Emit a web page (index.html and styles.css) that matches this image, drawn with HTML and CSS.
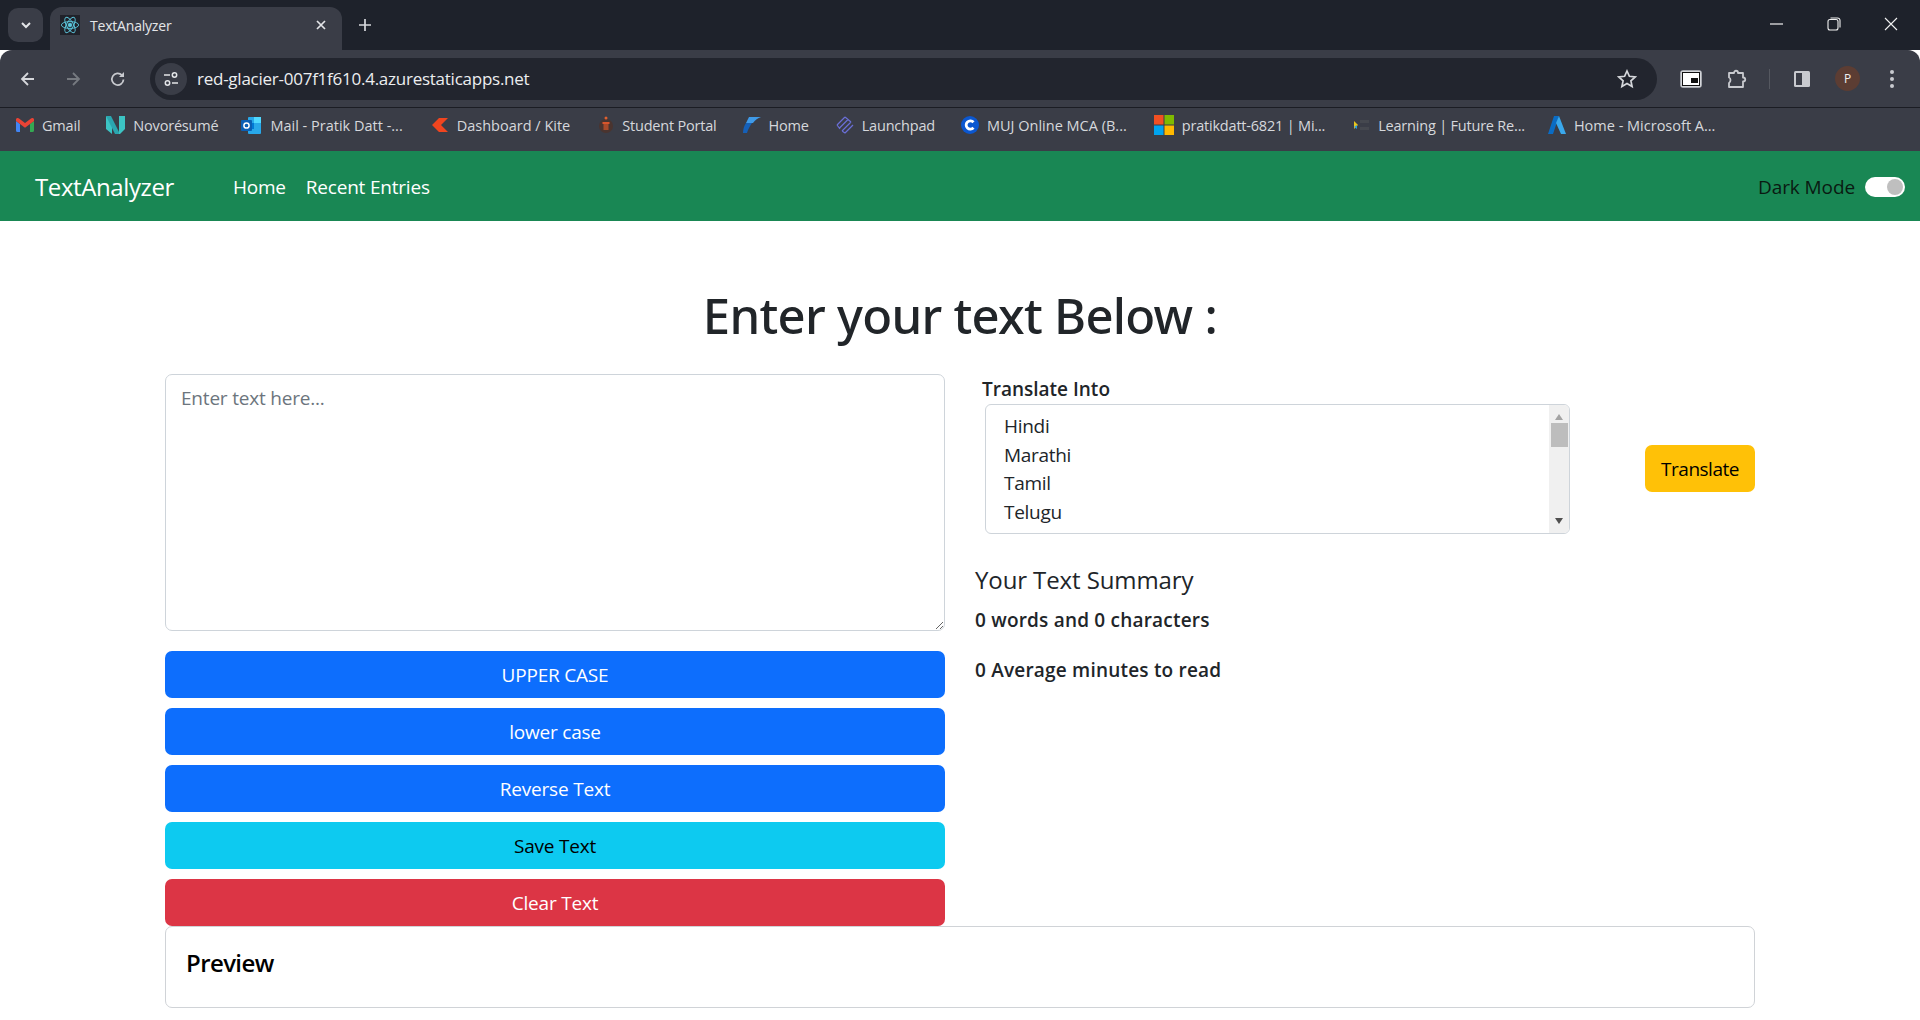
FILE: index.html
```html
<!DOCTYPE html>
<html lang="en">
<head>
  <meta charset="UTF-8">
  <title>TextAnalyzer</title>
  <link rel="stylesheet" href="styles.css">
</head>
<body>

  <!-- browser chrome -->
  <div class="tabstrip">
    <div class="tab-search">
      <svg width="14" height="14" viewBox="0 0 14 14"><path d="M3 5l4 4 4-4" fill="none" stroke="#e3e5e8" stroke-width="2"/></svg>
    </div>
    <div class="tab">
      <div class="tab-icon">
        <svg width="22" height="22" viewBox="0 0 22 22" fill="none" stroke="#5cc6dc" stroke-width="1">
          <ellipse cx="11" cy="11" rx="9.5" ry="3.8"/>
          <ellipse cx="11" cy="11" rx="9.5" ry="3.8" transform="rotate(60 11 11)"/>
          <ellipse cx="11" cy="11" rx="9.5" ry="3.8" transform="rotate(120 11 11)"/>
          <circle cx="11" cy="11" r="2" fill="#5cc6dc"/>
        </svg>
      </div>
      <span class="tab-title">TextAnalyzer</span>
      <svg class="tab-close" width="12" height="12" viewBox="0 0 12 12"><path d="M2 2l8 8M10 2l-8 8" stroke="#e3e5e8" stroke-width="1.7"/></svg>
    </div>
    <svg class="new-tab" width="14" height="14" viewBox="0 0 14 14"><path d="M7 1v12M1 7h12" stroke="#d6d8dc" stroke-width="1.7"/></svg>
    <div class="window-btns">
      <svg width="14" height="14" viewBox="0 0 14 14"><path d="M0 7h13" stroke="#f2f2f2" stroke-width="1.2"/></svg>
      <svg width="14" height="14" viewBox="0 0 14 14" fill="none" stroke="#f2f2f2" stroke-width="1.1"><rect x="1" y="2.5" width="10" height="10.5" rx="2"/><path d="M3.5 1h7a2.500 2.500 0 0 1 2.500 2.500v7"/></svg>
      <svg width="14" height="14" viewBox="0 0 14 14"><path d="M1 1l12 12M13 1L1 13" stroke="#f2f2f2" stroke-width="1.1"/></svg>
    </div>
  </div>

  <div class="toolbar">
    <svg class="nav-icon" width="18" height="18" viewBox="0 0 18 18" fill="none" stroke="#d5d7db" stroke-width="1.8"><path d="M15 9H3M9 3L3 9l6 6"/></svg>
    <svg class="nav-icon" width="18" height="18" viewBox="0 0 18 18" fill="none" stroke="#767a80" stroke-width="1.8"><path d="M3 9h12M9 3l6 6-6 6"/></svg>
    <svg class="nav-icon" width="18" height="18" viewBox="0 0 18 18" fill="none" stroke="#c8cacf" stroke-width="1.8"><path d="M14.500 9.500a5.800 5.800 0 1 1-1.600-4.300"/><path d="M15 2v5h-5z" fill="#c8cacf" stroke="none"/></svg>
    <div class="omnibox">
      <div class="site-info">
        <svg width="16" height="16" viewBox="0 0 16 16" fill="none" stroke="#e3e5e8" stroke-width="1.5"><path d="M1 4h6M9 12h6"/><circle cx="11.500" cy="4" r="2.200"/><circle cx="4.500" cy="12" r="2.200"/></svg>
      </div>
      <span class="url">red-glacier-007f1f610.4.azurestaticapps.net</span>
      <svg class="star" width="20" height="20" viewBox="0 0 20 20" fill="none" stroke="#d5d7db" stroke-width="1.7"><path d="M10 2l2.400 5.300 5.800.6-4.300 3.900 1.200 5.700-5.100-2.900-5.100 2.900 1.200-5.700L1.800 7.900l5.800-.6z"/></svg>
    </div>
    <div class="tool-icons">
      <svg width="22" height="18" viewBox="0 0 22 18"><rect x="1" y="1" width="20" height="16" rx="2" fill="#fff" stroke="#c8cacf" stroke-width="1.500"/><rect x="2.500" y="2.500" width="17" height="13" fill="#fff" stroke="#111" stroke-width="1"/><rect x="11" y="8" width="7" height="5" fill="#111"/></svg>
      <svg width="22" height="22" viewBox="0 0 22 22" fill="none" stroke="#c8cacf" stroke-width="1.800"><path d="M3 5h5c0-3 4-3 4 0h5v4.500c3 0 3 4 0 4V19H3v-4c2-1 2-5 0-5.500z" stroke-linejoin="round"/></svg>
      <span class="tool-sep"></span>
      <svg width="18" height="18" viewBox="0 0 18 18"><rect x="1" y="1" width="16" height="16" rx="1.500" fill="#c8cacf"/><rect x="3" y="3" width="6" height="12" fill="#3a3d47"/></svg>
      <span class="avatar">P</span>
      <svg class="menu-dots" width="6" height="20" viewBox="0 0 6 20" fill="#c8cacf"><circle cx="3" cy="3" r="2"/><circle cx="3" cy="10" r="2"/><circle cx="3" cy="17" r="2"/></svg>
    </div>
  </div>

  <div class="bookmarks">
    <a class="bm bm-gmail">
      <svg width="18" height="14" viewBox="0 0 18 14"><path d="M0 3v9.500A1.500 1.500 0 0 0 1.500 14H4V6z" fill="#4285f4"/><path d="M14 6v8h2.500a1.500 1.500 0 0 0 1.500-1.500V3z" fill="#34a853"/><path d="M4 6L0 3V1.500C0 0 1.800-.5 3 .5L9 5l6-4.500c1.200-1 3-.5 3 1V3l-4 3-5 3.700z" fill="#ea4335"/></svg>
      Gmail
    </a>
    <a class="bm bm-novo">
      <svg width="19" height="20" viewBox="0 0 19 20"><path d="M0 1l6 5v13L0 14z" fill="#3cc4c4"/><path d="M0 1h5l9 18h-5z" fill="#2aa6b0"/><path d="M13 1h6v13l-5 5h-1z" fill="#3cc4c4"/></svg>
      Novorésumé
    </a>
    <a class="bm bm-mail">
      <svg width="21" height="19" viewBox="0 0 21 19"><rect x="7" y="1" width="13" height="17" rx="1" fill="#28a8ea"/><rect x="13" y="1" width="7" height="6" fill="#50d9ff"/><rect x="7" y="7" width="6" height="6" fill="#0078d4"/><rect x="0" y="4" width="11" height="11" rx="1" fill="#0a5fb4"/><circle cx="5.500" cy="9.500" r="2.600" fill="none" stroke="#fff" stroke-width="1.500"/></svg>
      Mail - Pratik Datt -...
    </a>
    <a class="bm bm-kite">
      <svg width="18" height="14" viewBox="0 0 18 14"><path d="M8 0h9L10 7l7 7H8L1 7z" fill="#f0451f"/></svg>
      Dashboard / Kite
    </a>
    <a class="bm bm-portal">
      <svg width="16" height="20" viewBox="0 0 16 20"><circle cx="8" cy="11" r="7" fill="#4a342f"/><rect x="4.500" y="7" width="7" height="2" fill="#d9552c"/><rect x="5.500" y="9" width="5" height="6" fill="#a94a2a"/><circle cx="8" cy="3" r="1.500" fill="#e0602f"/></svg>
      Student Portal
    </a>
    <a class="bm bm-home">
      <svg width="18" height="18" viewBox="0 0 18 18"><path d="M6 1h12c-3 1-6 3-8 6H3z" fill="#3f9ae8"/><path d="M3 7h6c-2 3-4 6-5 10H0c0-4 1-7 3-10z" fill="#1560b8"/></svg>
      Home
    </a>
    <a class="bm bm-launch">
      <svg width="18" height="18" viewBox="0 0 18 18" fill="none" stroke="#6a6fd8" stroke-width="1.200"><path d="M1 9l8-8M3.500 12L12 3.500M6 15l9-9M9 17l8-8M1 9l3 4M6 15l3 2M12 3.500L9 1M15 6l-3-2.500"/></svg>
      Launchpad
    </a>
    <a class="bm bm-muj">
      <svg width="18" height="18" viewBox="0 0 18 18"><circle cx="9" cy="9" r="9" fill="#0b57d0"/><path d="M12.500 6.200a4.200 4.200 0 1 0 0 5.600" fill="none" stroke="#fff" stroke-width="2.800"/></svg>
      MUJ Online MCA (B...
    </a>
    <a class="bm bm-ms">
      <svg width="20" height="20" viewBox="0 0 20 20"><rect width="9.500" height="9.500" fill="#f25022"/><rect x="10.500" width="9.500" height="9.500" fill="#7fba00"/><rect y="10.500" width="9.500" height="9.500" fill="#00a4ef"/><rect x="10.500" y="10.500" width="9.500" height="9.500" fill="#ffb900"/></svg>
      pratikdatt-6821 | Mi...
    </a>
    <a class="bm bm-future">
      <svg width="18" height="16" viewBox="0 0 18 16"><path d="M2 4l4 4-4 4z" fill="#e8c51c"/><path d="M2 10l3-2v4z" fill="#2a9de0"/><rect x="8" y="3" width="9" height="3" fill="#45484f"/><rect x="8" y="10" width="9" height="3" fill="#45484f"/></svg>
      Learning | Future Re...
    </a>
    <a class="bm bm-azure">
      <svg width="18" height="20" viewBox="0 0 18 20"><path d="M6 1h5L5 19H0z" fill="#0a6cc4"/><path d="M11 1l7 18h-5L8 8z" fill="#3aa8ec"/></svg>
      Home - Microsoft A...
    </a>
  </div>

  <!-- page -->
  <nav class="navbar">
    <span class="brand">TextAnalyzer</span>
    <a class="nav-link">Home</a>
    <a class="nav-link">Recent Entries</a>
    <div class="dark-mode">
      <span>Dark Mode</span>
      <span class="switch"><span class="switch-knob"></span></span>
    </div>
  </nav>

  <main class="container">
    <h1>Enter your text Below :</h1>

    <div class="columns">
      <div class="left-col">
        <textarea class="text-input" placeholder="Enter text here..."></textarea>
        <button class="btn btn-primary btn-first">UPPER CASE</button>
        <button class="btn btn-primary">lower case</button>
        <button class="btn btn-primary">Reverse Text</button>
        <button class="btn btn-info">Save Text</button>
        <button class="btn btn-danger">Clear Text</button>
      </div>

      <div class="right-col">
        <div class="translate-row">
          <div class="translate-field">
            <label class="translate-label">Translate Into</label>
            <div class="lang-list">
              <div class="lang-options">
                <div>Hindi</div>
                <div>Marathi</div>
                <div>Tamil</div>
                <div>Telugu</div>
                <div>Kannada</div>
              </div>
              <div class="scrollbar">
                <svg width="10" height="8" viewBox="0 0 10 8"><path d="M5 1l4 6H1z" fill="#a3a3a3"/></svg>
                <span class="scroll-thumb"></span>
                <svg class="scroll-down" width="10" height="8" viewBox="0 0 10 8"><path d="M5 7l4-6H1z" fill="#505050"/></svg>
              </div>
            </div>
          </div>
          <button class="btn btn-warning">Translate</button>
        </div>

        <h4>Your Text Summary</h4>
        <p class="stat">0 words and 0 characters</p>
        <p class="stat">0 Average minutes to read</p>
      </div>
    </div>

    <div class="preview-card">
      <h4>Preview</h4>
    </div>
  </main>

</body>
</html>
```

FILE: styles.css
```css
* {
  box-sizing: border-box;
}

html, body {
  height: 1020px;
  overflow: hidden;
}

body {
  margin: 0;
  font-family: "Open Sans", "Noto Sans", Arial, sans-serif;
  color: #212529;
  background: #fff;
}

/* tab strip */
.tabstrip {
  height: 50px;
  background: #1e222b;
  display: flex;
  align-items: flex-start;
  padding: 8px 0 0 8px;
}

.tab-search {
  width: 35px;
  height: 34px;
  margin-right: 7px;
  background: #3a3d47;
  border-radius: 10px;
  display: flex;
  align-items: center;
  justify-content: center;
}

.tab {
  width: 292px;
  height: 43px;
  margin-top: -1px;
  background: #3a3d47;
  border-radius: 12px 12px 0 0;
  display: flex;
  align-items: center;
  padding: 0 0 7px 10px;
  color: #e3e5e8;
  font-size: 14px;
}

.tab-icon {
  width: 20px;
  height: 20px;
  margin: 0 10px 0 0;
  background: #20222a;
  display: flex;
  align-items: center;
  justify-content: center;
  overflow: hidden;
  flex: none;
}

.tab-title {
  flex: 1;
  letter-spacing: -0.2px;
}

.tab-close {
  margin-right: 15px;
}

.new-tab {
  margin: 10px 0 0 16px;
}

.window-btns {
  margin: 9px 22px 0 auto;
  display: flex;
  gap: 43px;
}

/* toolbar */
.toolbar {
  height: 58px;
  background: #3a3d47;
  border-bottom: 1px solid #1b1d24;
  border-radius: 12px 12px 0 0;
  display: flex;
  align-items: center;
  padding: 0 0 0 19px;
  gap: 27px;
}

.nav-icon {
  flex: none;
}

.omnibox {
  width: 1507px;
  height: 42px;
  margin-left: -4px;
  background: #22252e;
  border-radius: 21px;
  display: flex;
  align-items: center;
  padding: 0 20px 0 5px;
  color: #eceef0;
  font-size: 17px;
}

.site-info {
  width: 32px;
  height: 32px;
  margin-right: 10px;
  background: #3a3d47;
  border-radius: 50%;
  display: flex;
  align-items: center;
  justify-content: center;
}

.url {
  flex: 1;
  letter-spacing: -0.25px;
}

.tool-icons {
  margin-left: -4px;
  display: flex;
  align-items: center;
  gap: 24px;
}

.tool-sep {
  width: 1px;
  height: 20px;
  margin: 0 -1px 0 -3px;
  background: #555860;
}

.avatar {
  width: 25px;
  height: 25px;
  border-radius: 50%;
  background: #5c3d33;
  color: #f0f0f0;
  font-size: 12px;
  display: flex;
  align-items: center;
  justify-content: center;
}

.menu-dots {
  margin-left: 5px;
}

/* bookmarks */
.bookmarks {
  height: 43px;
  background: #3a3d47;
  display: flex;
  align-items: center;
  padding: 0 0 9px 15px;
  color: #d6d8dc;
  font-size: 14.500px;
  letter-spacing: -0.2px;
  white-space: nowrap;
}

.bm {
  display: flex;
  align-items: center;
  gap: 8px;
  margin-right: 25px;
}

.bm-mail, .bm-kite, .bm-muj, .bm-azure {
  letter-spacing: 0;
}

.bm-gmail { margin-left: 1px; }
.bm-novo { margin-left: 1px; }
.bm-mail { margin-left: -2px; }
.bm-kite { margin-left: 3px; }
.bm-portal { margin-left: 3px; }
.bm-home { margin-left: 1px; }
.bm-launch { margin-left: 2px; }
.bm-muj { margin-left: 1px; }
.bm-ms { margin-left: 2px; }
.bm-future { margin-left: 2px; }
.bm-azure { margin-left: -2px; }

/* navbar */
.navbar {
  height: 70px;
  background: #198754;
  display: flex;
  align-items: center;
  padding: 2px 15px 0 35px;
}

.brand {
  font-size: 24px;
  color: #fff;
  margin: 0 59px 2px 0;
  letter-spacing: -0.4px;
}

.nav-link {
  font-size: 19px;
  color: #fff;
  margin-right: 20px;
  letter-spacing: -0.2px;
}

.dark-mode {
  margin-left: auto;
  display: flex;
  align-items: center;
  gap: 10px;
  font-size: 19px;
  color: #0a1a12;
  letter-spacing: -0.1px;
}

.switch {
  width: 40px;
  height: 20px;
  background: #fff;
  border-radius: 10px;
  display: flex;
  align-items: center;
  justify-content: flex-end;
  padding-right: 2px;
}

.switch-knob {
  width: 16px;
  height: 16px;
  border-radius: 50%;
  background: #bfbfbf;
}

/* main */
.container {
  padding: 0 165px;
}

h1 {
  margin: 64px 0 29px;
  font-family: "Noto Sans", "Open Sans", sans-serif;
  font-size: 49px;
  line-height: 60px;
  font-weight: 500;
  text-align: center;
  letter-spacing: -0.7px;
}

.columns {
  display: flex;
  gap: 30px;
  height: 552px;
}

.left-col {
  width: 780px;
  flex: none;
  display: flex;
  flex-direction: column;
}

.text-input {
  height: 257px;
  padding: 10px 15px;
  border: 1px solid #ced4da;
  border-radius: 7px;
  font-family: inherit;
  font-size: 19px;
  letter-spacing: -0.2px;
  color: #212529;
  outline: none;
}

.text-input::placeholder {
  color: #6c757d;
  opacity: 1;
}

.btn {
  height: 47px;
  border: 0;
  border-radius: 7px;
  font-family: inherit;
  font-size: 19px;
  letter-spacing: -0.2px;
  margin-bottom: 10px;
}

.btn-first {
  margin-top: 20px;
}

.btn-primary {
  background: #0d6efd;
  color: #fff;
}

.btn-info {
  background: #0dcaf0;
  color: #000;
}

.btn-danger {
  background: #dc3545;
  color: #fff;
  margin-bottom: 0;
}

.btn-warning {
  background: #ffc107;
  color: #000;
  width: 110px;
  margin: 71px 0 0 75px;
  flex: none;
  letter-spacing: -0.5px;
}

.right-col {
  flex: 1;
}

.translate-row {
  display: flex;
  height: 180px;
}

.translate-field {
  width: 595px;
  padding: 3px 0 0 7px;
}

.translate-label {
  display: block;
  font-size: 19px;
  font-weight: 600;
  line-height: 24px;
  margin-bottom: 3px;
  letter-spacing: 0;
}

.lang-list {
  margin-left: 3px;
  width: 585px;
  height: 130px;
  border: 1px solid #ced4da;
  border-radius: 6px;
  display: flex;
  overflow: hidden;
}

.lang-options {
  flex: 1;
  padding: 7px 18px 0;
  font-size: 19px;
  line-height: 28.500px;
  overflow: hidden;
  letter-spacing: -0.3px;
}

.scrollbar {
  width: 20px;
  background: #f0f0f0;
  display: flex;
  flex-direction: column;
  align-items: center;
  padding: 8px 0 8px;
}

.scroll-thumb {
  width: 17px;
  height: 24px;
  margin-top: 2px;
  background: #bdbdbd;
}

.scroll-down {
  margin-top: auto;
}

h4 {
  margin: 0;
  font-size: 24px;
  line-height: 29px;
  font-weight: 500;
  letter-spacing: -0.1px;
}

.right-col h4 {
  margin: 11px 0 14px;
}

.stat {
  margin: 0 0 25px;
  font-size: 19px;
  font-weight: 600;
  line-height: 25px;
  letter-spacing: 0.2px;
}

.preview-card {
  height: 82px;
  border: 1px solid #d0d3d7;
  border-radius: 7px;
  padding: 21px 20px;
  color: #000;
}

.preview-card h4 {
  font-weight: 600;
  letter-spacing: -0.6px;
}
```
